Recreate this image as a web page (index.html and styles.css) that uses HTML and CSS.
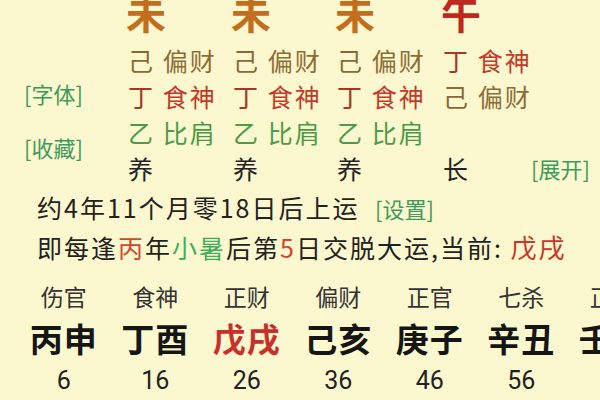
FILE: index.html
```html
<!DOCTYPE html>
<html lang="zh-CN">
<head>
<meta charset="utf-8">
<title>排盘</title>
<link rel="stylesheet" href="styles.css">
</head>
<body>
<div class="page">
  <div class="pillars">
    <div class="labels">
      <span class="link">[字体]</span>
      <span class="link">[收藏]</span>
    </div>
    <div class="col c1">
      <div class="branch earth-b">未</div>
      <div class="row"><span class="stem earth">己</span> <span class="god earth">偏财</span></div>
      <div class="row"><span class="stem fire">丁</span> <span class="god fire">食神</span></div>
      <div class="row"><span class="stem wood">乙</span> <span class="god wood">比肩</span></div>
      <div class="row phase">养</div>
    </div>
    <div class="col c2">
      <div class="branch earth-b">未</div>
      <div class="row"><span class="stem earth">己</span> <span class="god earth">偏财</span></div>
      <div class="row"><span class="stem fire">丁</span> <span class="god fire">食神</span></div>
      <div class="row"><span class="stem wood">乙</span> <span class="god wood">比肩</span></div>
      <div class="row phase">养</div>
    </div>
    <div class="col c3">
      <div class="branch earth-b">未</div>
      <div class="row"><span class="stem earth">己</span> <span class="god earth">偏财</span></div>
      <div class="row"><span class="stem fire">丁</span> <span class="god fire">食神</span></div>
      <div class="row"><span class="stem wood">乙</span> <span class="god wood">比肩</span></div>
      <div class="row phase">养</div>
    </div>
    <div class="col c4">
      <div class="branch fire-b">午</div>
      <div class="row"><span class="stem fire">丁</span> <span class="god fire">食神</span></div>
      <div class="row"><span class="stem earth">己</span> <span class="god earth">偏财</span></div>
      <div class="row"></div>
      <div class="row phase">长</div>
    </div>
    <div class="col expand">
      <span class="link">[展开]</span>
    </div>
  </div>

  <div class="line">约4年11个月零18日后上运 <span class="link small">[设置]</span></div>
  <div class="line">即每逢<span class="red">丙</span>年<span class="green">小暑</span>后第<span class="red">5</span>日交脱大运,当前: <span class="current">戊戌</span></div>

  <div class="dayun">
    <div class="step"><div class="tg">伤官</div><div class="gz">丙申</div><div class="age">6</div></div>
    <div class="step"><div class="tg">食神</div><div class="gz">丁酉</div><div class="age">16</div></div>
    <div class="step"><div class="tg">正财</div><div class="gz now">戊戌</div><div class="age">26</div></div>
    <div class="step"><div class="tg">偏财</div><div class="gz">己亥</div><div class="age">36</div></div>
    <div class="step"><div class="tg">正官</div><div class="gz">庚子</div><div class="age">46</div></div>
    <div class="step"><div class="tg">七杀</div><div class="gz">辛丑</div><div class="age">56</div></div>
    <div class="step"><div class="tg">正印</div><div class="gz">壬寅</div><div class="age"></div></div>
  </div>
</div>
</body>
</html>
```

FILE: styles.css
```css
html, body {
  margin: 0;
  padding: 0;
  background: #fbf7ce;
}
body {
  width: 600px;
  height: 400px;
  overflow: hidden;
  font-family: "Noto Sans CJK SC", "Noto Sans", sans-serif;
  color: #222;
}
.page {
  width: 600px;
}
.pillars {
  display: flex;
  height: 186px;
}
.labels {
  width: 128px;
  flex: none;
  display: flex;
  flex-direction: column;
  align-items: flex-start;
  padding-top: 79px;
  padding-left: 24px;
  box-sizing: border-box;
  gap: 26px;
}
.link {
  color: #3f9a5c;
  font-size: 22px;
  line-height: 28px;
}
.col {
  flex: none;
  display: flex;
  flex-direction: column;
  white-space: nowrap;
}
.c1 { width: 105px; }
.c2 { width: 104px; }
.c3 { width: 106px; }
.c4 { width: 89px; }
.expand {
  justify-content: flex-end;
  padding-bottom: 4px;
  margin-left: -1px;
}
.branch {
  font-size: 40px;
  font-weight: bold;
  line-height: 24px;
  height: 24px;
  margin-bottom: 18px;
  margin-left: -2px;
}
.earth-b { color: #c26e1f; }
.fire-b { color: #c0271f; }
.row {
  height: 36px;
  line-height: 36px;
  font-size: 25px;
  letter-spacing: 2px;
}
.stem.earth { color: #8a6a34; }
.god.earth { color: #8e6c36; }
.stem.fire { color: #a13a26; }
.god.fire { color: #c23a2c; }
.stem.wood { color: #4d9a4a; }
.god.wood { color: #4d9a4a; }
.phase { color: #222; }

.line {
  height: 40px;
  line-height: 40px;
  font-size: 25px;
  letter-spacing: 2px;
  padding-left: 37px;
  white-space: nowrap;
}
.pillars + .line { margin-top: 1px; }
.small {
  font-size: 22px;
  letter-spacing: 0;
  margin-left: 8px;
}
.red { color: #d2452c; }
.green { color: #3fae5c; }
.current {
  color: #c6382a;
  font-size: 26px;
}

.dayun {
  display: grid;
  grid-template-columns: repeat(7, 91.5px);
  padding-left: 18px;
  margin-top: 14px;
  white-space: nowrap;
}
.step {
  text-align: center;
}
.tg {
  height: 30px;
  line-height: 30px;
  font-size: 23px;
  color: #333;
}
.gz {
  margin-top: 5px;
  height: 44px;
  line-height: 44px;
  font-size: 33px;
  font-weight: bold;
  letter-spacing: 1px;
  color: #151515;
}
.gz.now { color: #c8302a; }
.age {
  margin-top: 6px;
  height: 30px;
  line-height: 30px;
  font-family: Roboto, "Noto Sans", sans-serif;
  font-size: 25px;
  color: #222;
}
```
